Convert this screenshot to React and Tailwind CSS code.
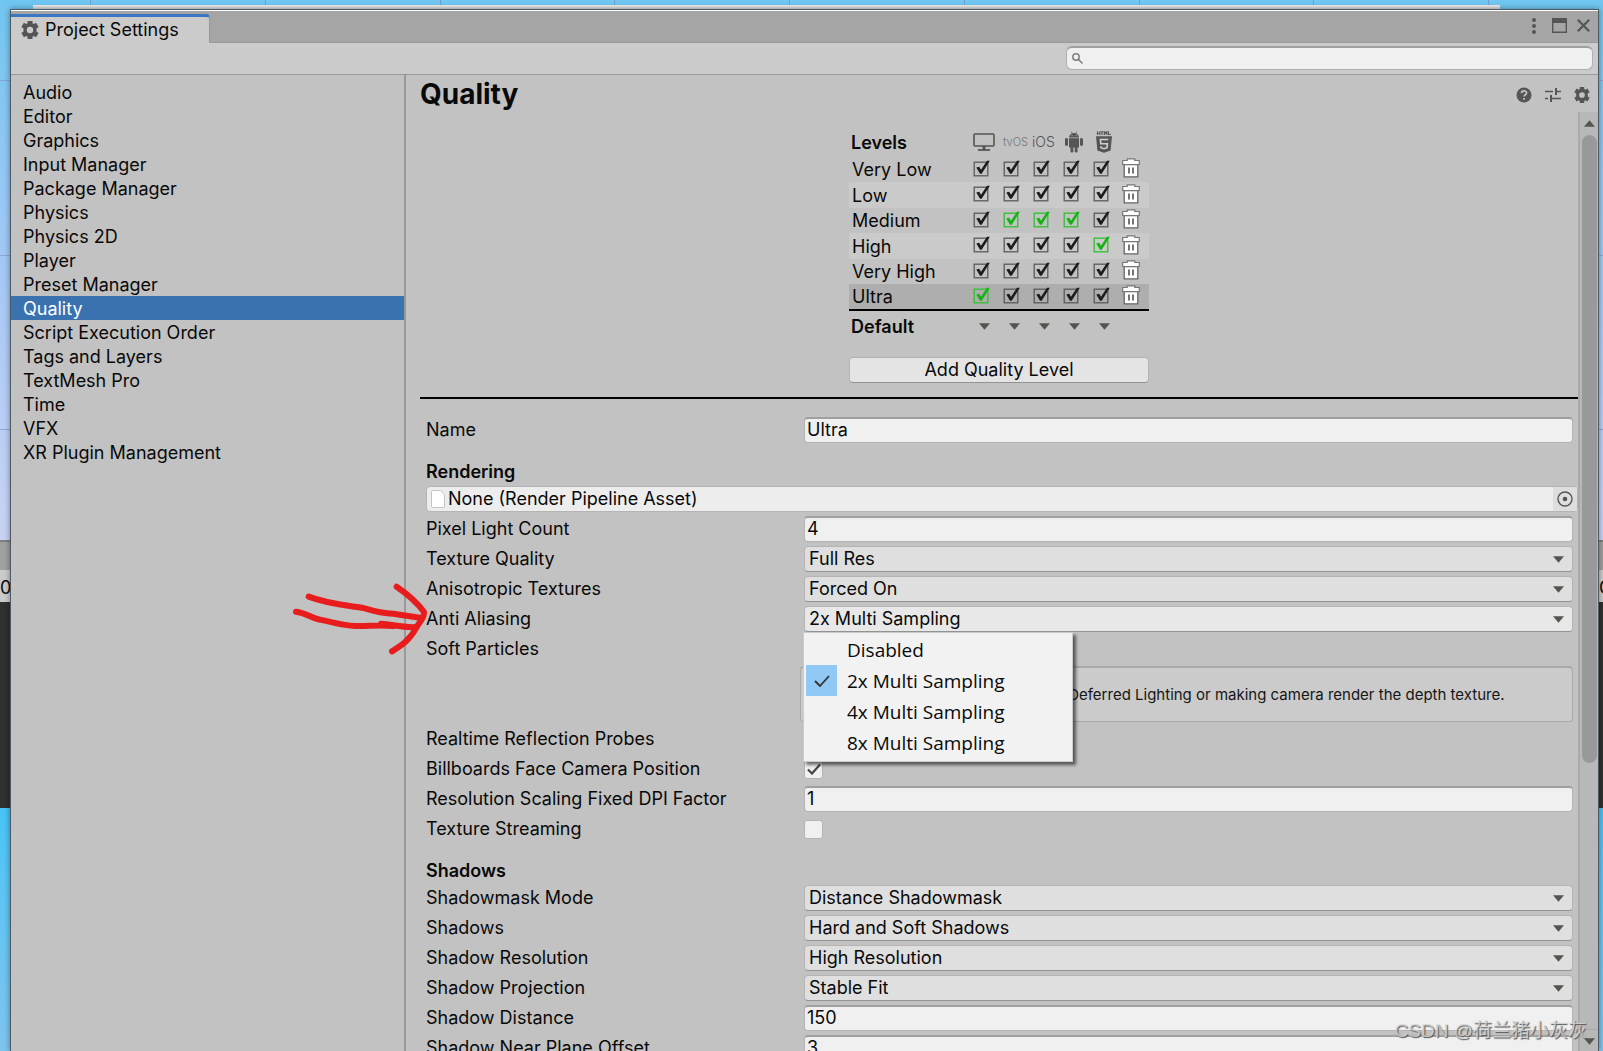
import { useState } from "react";

const SECTIONS = [
  "Audio", "Editor", "Graphics", "Input Manager", "Package Manager", "Physics",
  "Physics 2D", "Player", "Preset Manager", "Quality", "Script Execution Order",
  "Tags and Layers", "TextMesh Pro", "Time", "VFX", "XR Plugin Management",
];

// def = index of the platforms that use this level by default
const LEVELS = [
  { name: "Very Low",  def: [],        row: "h-[25px]" },
  { name: "Low",       def: [],        row: "h-[26px] bg-[#cacaca]" },
  { name: "Medium",    def: [1, 2, 3], row: "h-[25px]" },
  { name: "High",      def: [4],       row: "h-[26px] bg-[#cacaca]" },
  { name: "Very High", def: [],        row: "h-[25px]" },
  { name: "Ultra",     def: [0],       row: "h-[26px] bg-[#aeaeae]" },
];

const PLATFORMS = ["Standalone", "tvOS", "iOS", "Android", "WebGL"];
const AA_OPTIONS = ["Disabled", "2x Multi Sampling", "4x Multi Sampling", "8x Multi Sampling"];

/* ---------- icons ---------- */

function Gear({ className }) {
  return (
    <svg viewBox="0 0 18 18" className={className} fill="#555">
      <path
        fillRule="evenodd"
        d="M6.5 0h5v2.3l1.2.7 2.4-1.2 2.5 4.2-2.1 1.4v3.2l2.1 1.4-2.5 4.2-2.4-1.2-1.2.7V18h-5v-2.3l-1.2-.7-2.4 1.2L.4 12l2.1-1.4V7.4L.4 6l2.5-4.2L5.3 3l1.2-.7zM9 5.8a3.2 3.2 0 1 0 0 6.4 3.2 3.2 0 0 0 0-6.4z"
      />
    </svg>
  );
}

function Caret({ className = "" }) {
  return (
    <svg viewBox="0 0 12 7" className={`h-[7px] w-[11px] pointer-events-none ${className}`} fill="#555550">
      <path d="M0 0h12L6 7z" />
    </svg>
  );
}

function Monitor() {
  return (
    <svg viewBox="0 0 22 18" className="h-[18px] w-[22px]" fill="none" stroke="#555">
      <rect x="1" y="1" width="20" height="12" rx="1" strokeWidth="1.6" />
      <path d="M11 13v3.5" strokeWidth="3" />
      <path d="M5 17h12" strokeWidth="1.8" />
    </svg>
  );
}

function Android() {
  return (
    <svg viewBox="0 0 18 22" className="h-[22px] w-[18px]" fill="#555">
      <path d="M4 6.5C4 4.5 5.5 3 7 2.4L6 .6l.5-.3 1.1 1.9a5 5 0 0 1 2.8 0L11.5.3l.5.3-1 1.8c1.500.6 3 2.100 3 4.100z" />
      <path d="M4 7.2h10v9.300H4z" />
      <rect x="0" y="7" width="3" height="8" rx="1.4" />
      <rect x="15" y="7" width="3" height="8" rx="1.4" />
      <rect x="5.500" y="14" width="2.8" height="7.5" rx="1.2" />
      <rect x="9.700" y="14" width="2.8" height="7.5" rx="1.2" />
      <circle cx="7" cy="4.6" r=".6" fill="#c2c2c2" />
      <circle cx="11" cy="4.6" r=".6" fill="#c2c2c2" />
    </svg>
  );
}

function Html5() {
  return (
    <svg viewBox="0 0 16 22" className="h-[22px] w-[16px]" fill="#555">
      <path d="M1.5.3V4M3.900.3V4M1.5 2.200h2.400M4.700.8h2.600M6 .8V4M8.300 4V.6l1.300 1.800L10.900.6V4M12.500.3v3.200h2.200" fill="none" stroke="#555" strokeWidth="1.1" />
      <path d="M0 5.200h16l-1.4 14.3L8 21.8l-6.600-2.300z" />
      <path d="M12.3 8.500H4.400l.4 4.300h6.600l-.4 3.900-3 1-3-1-.1-1.500" fill="none" stroke="#d0d0d0" strokeWidth="1.6" />
    </svg>
  );
}

function Trash() {
  return (
    <svg viewBox="0 0 18 20" className="h-[20px] w-[18px]" fill="#fff" stroke="#666" strokeWidth="1.3">
      <path d="M2.2 6.5h13.6v12.3H2.200z" />
      <path d="M.7 2.5h4.500V.8h7.600v1.700h4.500v4H.7z" stroke="#777" strokeWidth="1.2" />
      <path d="M7 9.500v6M11 9.500v6" strokeWidth="1.8" />
    </svg>
  );
}

/* ---------- controls ---------- */

function Row({ label, id, children }) {
  return (
    <div className="flex h-[26px] items-center mb-1">
      <label htmlFor={id} className="w-[378px] shrink-0">{label}</label>
      {children}
    </div>
  );
}

function TextRow({ label, id, value }) {
  return (
    <Row label={label} id={id}>
      <input
        id={id}
        defaultValue={value}
        className="h-[26px] min-w-0 flex-1 rounded border border-[#b4b4b4] border-t-2 border-t-[#a0a0a0] bg-[#f0f0f0] px-[2px] pb-[2px] outline-none"
      />
    </Row>
  );
}

function SelectRow({ label, id, value, options = [value], open, onChange }) {
  return (
    <Row label={label} id={id}>
      <div className="grid min-w-0 flex-1 items-center">
        <select
          id={id}
          value={value}
          onChange={e => onChange?.(e.target.value)}
          className={`col-start-1 row-start-1 h-[26px] appearance-none rounded border border-[#b4b4b4] border-b-[#939393] px-1 outline-none ${open ? "bg-[#e8e8e8]" : "bg-[#dfdfdf]"}`}
        >
          {options.map(o => <option key={o}>{o}</option>)}
        </select>
        <Caret className="col-start-1 row-start-1 mr-[9px] justify-self-end" />
      </div>
    </Row>
  );
}

function CheckRow({ label, id, checked }) {
  return (
    <Row label={label} id={id}>
      <span className="grid size-[19px] place-items-center">
        <input
          id={id}
          type="checkbox"
          defaultChecked={checked}
          className="peer col-start-1 row-start-1 size-[19px] appearance-none rounded-[3px] border border-[#b4b4b4] bg-[#f0f0f0]"
        />
        <svg viewBox="0 0 14 12" className="pointer-events-none invisible col-start-1 row-start-1 w-[14px] peer-checked:visible" fill="none" stroke="#444" strokeWidth="2.2">
          <path d="M1 6.500l4 4 8-9" />
        </svg>
      </span>
    </Row>
  );
}

function LevelCheck({ label, green }) {
  return (
    <label className={`grid w-[18px] ${green ? "text-[#12b312]" : "text-[#1c1c1c]"}`}>
      <input type="checkbox" defaultChecked aria-label={label} className="peer col-start-1 row-start-1 size-[17px] appearance-none" />
      <svg viewBox="0 0 17 17" className="pointer-events-none col-start-1 row-start-1 size-[17px]" fill="none">
        <rect x="1.2" y="2.2" width="13.6" height="13.6" stroke={green ? "#2fc02f" : "#5a5a5a"} strokeWidth="1.3" />
        <path d="M3.3 7.500l2.900-.8 1.800 3L14 .8h2.800L8.700 13.800H7z" fill="currentColor" />
      </svg>
    </label>
  );
}

/* ---------- panels ---------- */

// Desktop and the other editor window, seen round the edges
function Backdrop() {
  return (
    <div className="absolute inset-0 flex flex-col bg-[#76c9f5]">
      <div className="h-[540px] bg-linear-to-b from-[#6fc6f0] via-[#a5c8f5] via-50% to-[#c9d3f3]">
        <div className="flex h-[9px] justify-between pl-[90px] pr-[114px]">
          {[0, 1, 2, 3, 4, 5, 6, 7, 8].map(i => <i key={i} className="w-px bg-[#6f9fd0]" />)}
        </div>
        <div className="mt-[71px] h-px bg-[#8aa6d8]" />
        <div className="mt-[174px] h-px bg-[#8fa6dc]" />
        <div className="mt-[173px] h-px bg-[#8fa6dc]" />
      </div>
      <div className="h-[30px] border-t-2 border-[#808080] bg-[#a0a0a0]" />
      <div className="flex h-8 items-center justify-between bg-[#cbcbcb] pt-1 text-[18px]">
        <span className="w-[10px] overflow-hidden">0(</span>
        <span className="w-1 overflow-hidden">C</span>
      </div>
      <div className="h-[206px] bg-[#303030]" />
      <div className="flex-1 bg-linear-to-b from-[#45c5f6] to-[#7ec4ef]" />
      <div className="absolute left-[33px] right-[103px] top-[5px] h-1 bg-linear-to-b from-[#f0f0f0] to-[#d8d8d8]" />
    </div>
  );
}

function TitleBar() {
  return (
    <header>
      <div className="flex h-8 items-stretch justify-between border-b border-[#999] bg-[#a5a5a5]">
        <h2 className="-mb-px mt-[3px] flex w-[199px] items-center gap-[6px] rounded-tr border-r border-t-[3px] border-r-[#999] border-t-[#3b76c4] bg-[#cbcbcb] pl-[10px] text-[18px]">
          <Gear className="size-[18px]" />
          Project Settings
        </h2>
        <div className="flex items-center gap-[10px] pb-[2px] pr-2">
          <button aria-label="Menu" className="mr-[6px]">
            <svg viewBox="0 0 4 16" className="h-4 w-1" fill="#555">
              <circle cx="2" cy="2" r="2" /><circle cx="2" cy="8" r="2" /><circle cx="2" cy="14" r="2" />
            </svg>
          </button>
          <button aria-label="Maximize">
            <svg viewBox="0 0 15 15" className="size-[15px]" fill="none" stroke="#555">
              <path d="M.7.700h13.600v13.600H.7z" strokeWidth="1.4" />
              <path d="M0 2.500h15" strokeWidth="5" />
            </svg>
          </button>
          <button aria-label="Close">
            <svg viewBox="0 0 13 13" className="size-[13px]" stroke="#555" strokeWidth="2.2">
              <path d="M.8.800l11.400 11.400M12.200.800L.8 12.200" />
            </svg>
          </button>
        </div>
      </div>
      <div className="flex h-8 items-center justify-end border-b border-[#999] bg-[#cbcbcb] pb-px pr-[5px]">
        <label className="flex h-6 w-1/3 items-center rounded-md border border-[#b0b0b0] border-t-2 border-t-[#a0a0a0] bg-[#f0f0f0] px-[5px]">
          <svg viewBox="0 0 11 11" className="size-[11px]" fill="none" stroke="#808080" strokeWidth="1.5">
            <circle cx="4" cy="4" r="3.2" /><path d="M6.400 6.400l4.100 4.100" />
          </svg>
          <input type="text" aria-label="Search" className="min-w-0 flex-1 bg-transparent pl-1 outline-none" />
        </label>
      </div>
    </header>
  );
}

function Levels() {
  return (
    <div className="mx-auto w-[300px]">
      <table className="w-full table-fixed border-collapse text-[18px] leading-5">
        <thead className="text-left">
          <tr className="h-[29px]">
            <th className="w-[123px] p-0 pl-[2px] font-semibold">Levels</th>
            <th className="w-[30px] p-0 pb-[2px] pl-px" aria-label="Standalone"><Monitor /></th>
            <th className="w-[30px] p-0 pb-[2px] pl-px text-[11px] font-light text-[#777]">tvOS</th>
            <th className="w-[30px] p-0 pb-[2px] text-[14px] font-light text-[#555]">iOS</th>
            <th className="w-[30px] p-0 pb-[2px] pl-[3px]" aria-label="Android"><Android /></th>
            <th className="w-[30px] p-0 pb-[2px] pl-1" aria-label="WebGL"><Html5 /></th>
            <th />
          </tr>
        </thead>
        <tbody className="border-b-2 border-black">
          {LEVELS.map(l => (
            <tr key={l.name} className={l.row}>
              <td className="p-0 pl-[3px] pt-px">{l.name}</td>
              {PLATFORMS.map((p, i) => (
                <td key={p} className="p-0 pb-[3px] pl-px"><LevelCheck label={`${l.name} ${p}`} green={l.def.includes(i)} /></td>
              ))}
              <td className="p-0 pb-[3px]"><button aria-label={`Delete ${l.name}`} className="block"><Trash /></button></td>
            </tr>
          ))}
        </tbody>
        <tfoot>
          <tr className="h-8">
            <th className="p-0 pl-[2px] text-left font-semibold">Default</th>
            {PLATFORMS.map(p => (
              <td key={p} className="p-0 pl-[7px]"><button aria-label={`Default for ${p}`} className="block"><Caret /></button></td>
            ))}
            <td />
          </tr>
        </tfoot>
      </table>
      <button className="mt-[15px] block h-[26px] w-full rounded border border-[#b4b4b4] border-b-[#939393] bg-[#e4e4e4]">
        Add Quality Level
      </button>
    </div>
  );
}

function AntiAliasMenu({ value, onPick }) {
  return (
    <ul
      role="listbox"
      className="absolute left-[377px] top-[26px] z-10 w-[270px] border border-[#ccc] bg-[#f2f2f2] px-[2px] pb-[3px] pt-px text-[19px] shadow-[3px_3px_3px_rgba(0,0,0,0.55)]"
      style={{ fontFamily: '"Open Sans", "Noto Sans", sans-serif' }}
    >
      {AA_OPTIONS.map(o => (
        <li key={o} role="option" aria-selected={o === value}>
          <button onClick={() => onPick(o)} className="flex h-[31px] w-full items-center gap-[10px] text-left">
            <span className={`grid size-[31px] place-items-center ${o === value ? "bg-[#90c8f6]" : ""}`}>
              {o === value && (
                <svg viewBox="0 0 16 12" className="w-4" fill="none" stroke="#333" strokeWidth="1.8">
                  <path d="M1 6l5 5 9-10" />
                </svg>
              )}
            </span>
            {o}
          </button>
        </li>
      ))}
    </ul>
  );
}

export default function App() {
  const [section, setSection] = useState("Quality");
  const [aa, setAa] = useState("2x Multi Sampling");

  return (
    <div
      className="relative h-screen overflow-hidden pl-[10px] pr-1 pt-[9px] text-[18px] leading-6 text-[#090909]"
      style={{ fontFamily: "Inter, sans-serif" }}
    >
      <Backdrop />

      <div className="relative flex h-full flex-col border-x border-t border-[#4d5a66] bg-[#c2c2c2] shadow-[0_0_6px_rgba(0,0,0,0.4)]">
        <div className="h-px shrink-0 bg-white" />
        <TitleBar />

        <div className="flex min-h-0 flex-1">
          {/* Section list */}
          <nav className="w-[395px] shrink-0 border-r-2 border-[#999] pt-[5px]">
            {SECTIONS.map(s => (
              <a
                key={s}
                href="#"
                onClick={e => { e.preventDefault(); setSection(s); }}
                className={`block h-6 pl-3 pt-px ${s === section ? "bg-[#3a72b0] text-white" : ""}`}
              >
                {s}
              </a>
            ))}
          </nav>

          {/* Settings */}
          <main className="flex min-w-0 flex-1 flex-col">
            <div className="flex h-[37px] shrink-0 items-center justify-between pl-[14px] pr-2">
              <h1 className="text-[28px] font-bold">Quality</h1>
              <div className="flex items-center gap-[13px] pt-[2px]">
                <button aria-label="Help">
                  <svg viewBox="0 0 16 16" className="size-4">
                    <circle cx="8" cy="8" r="7.5" fill="#555" />
                    <path d="M5.500 6.300C5.500 3.200 10.600 3.200 10.600 6c0 1.800-2.500 1.800-2.500 3.600M8.100 11v1.800" fill="none" stroke="#c2c2c2" strokeWidth="1.7" />
                  </svg>
                </button>
                <button aria-label="Presets">
                  <svg viewBox="0 0 16 16" className="size-4" fill="none" stroke="#555" strokeWidth="2">
                    <path d="M0 4.500h8M11 4.500h5M0 11.500h3M6 11.500h10" strokeWidth="1.6" />
                    <path d="M11 1v7M6 8v7" />
                  </svg>
                </button>
                <button aria-label="Options"><Gear className="size-4" /></button>
              </div>
            </div>

            <div className="flex min-h-0 flex-1">
              <div className="min-w-0 flex-1 overflow-hidden pl-[14px] pt-4">
                <Levels />
                <hr className="mt-[14px] border-t-2 border-black" />

                <form className="pl-[6px] pr-[5px] pt-[18px]" onSubmit={e => e.preventDefault()}>
                  <TextRow label="Name" id="name" value="Ultra" />

                  <h3 className="mt-[15px] h-7 font-semibold leading-7">Rendering</h3>
                  <div className="-mr-[5px] mb-1 flex h-[26px] items-center rounded border border-[#b4b4b4] bg-[#ededed] pl-1">
                    <svg viewBox="0 0 14 18" className="h-[18px] w-[14px]" fill="#fff" stroke="#c4c4c4">
                      <path d="M2 .5h7.500l4 4V16a1.500 1.500 0 0 1-1.500 1.500H2A1.500 1.500 0 0 1 .5 16V2A1.500 1.500 0 0 1 2 .5z" />
                    </svg>
                    <span className="flex-1 pl-[3px]">None (Render Pipeline Asset)</span>
                    <button aria-label="Select asset" className="grid h-6 w-6 place-items-center bg-[#dedede]">
                      <svg viewBox="0 0 16 16" className="size-4" fill="none" stroke="#555" strokeWidth="1.4">
                        <circle cx="8" cy="8" r="7" /><circle cx="8" cy="8" r="1.6" fill="#555" />
                      </svg>
                    </button>
                  </div>

                  <TextRow label="Pixel Light Count" id="lights" value="4" />
                  <SelectRow label="Texture Quality" id="texq" value="Full Res" />
                  <SelectRow label="Anisotropic Textures" id="aniso" value="Forced On" />
                  <div className="relative">
                    <SelectRow label="Anti Aliasing" id="aa" value={aa} options={AA_OPTIONS} onChange={setAa} open />
                    <AntiAliasMenu value={aa} onPick={setAa} />
                  </div>
                  <CheckRow label="Soft Particles" id="soft" />
                  <div className="mb-1 ml-[374px] flex h-[56px] items-center rounded border border-[#a9a9a9] border-t-2 bg-[#cbcbcb] pl-[72px] text-[15px] text-[#161616]">
                    <p className="truncate">Soft Particles require using Deferred Lighting or making camera render the depth texture.</p>
                  </div>
                  <CheckRow label="Realtime Reflection Probes" id="probes" checked />
                  <CheckRow label="Billboards Face Camera Position" id="billboards" checked />
                  <TextRow label="Resolution Scaling Fixed DPI Factor" id="dpi" value="1" />
                  <CheckRow label="Texture Streaming" id="streaming" />

                  <h3 className="mt-[15px] h-7 font-semibold leading-7">Shadows</h3>
                  <SelectRow label="Shadowmask Mode" id="mask" value="Distance Shadowmask" />
                  <SelectRow label="Shadows" id="shadows" value="Hard and Soft Shadows" />
                  <SelectRow label="Shadow Resolution" id="shres" value="High Resolution" />
                  <SelectRow label="Shadow Projection" id="shproj" value="Stable Fit" />
                  <TextRow label="Shadow Distance" id="shdist" value="150" />
                  <TextRow label="Shadow Near Plane Offset" id="shnear" value="3" />
                </form>
              </div>

              {/* Scroll bar */}
              <div className="flex w-5 shrink-0 flex-col items-center border-l-2 border-[#aaa] bg-[#b8b8b8] pb-[6px] pt-2">
                <Caret className="rotate-180" />
                <div className="mt-2 min-h-0 w-[15px] flex-[627] rounded-full bg-[#999]" />
                <div className="flex-[266]" />
                <div className="mb-2 h-px w-full bg-[#a8a8a8]" />
                <Caret />
              </div>
            </div>
          </main>
        </div>
      </div>

      {/* Hand-drawn arrow */}
      <svg viewBox="0 0 900 330" className="pointer-events-none absolute left-[280px] top-[560px] h-[110px] w-[300px]" fill="none" stroke="#e81c1c" strokeWidth="18" strokeLinecap="round" strokeLinejoin="round">
        <path d="M86 110C140 131 190 135 250 144C280 153 300 160 340 161L424 174" />
        <path d="M48 155C80 158 90 174 120 179C160 187 190 197 225 198C270 198 300 194 340 198M303 191C340 194 370 204 410 201" />
        <path d="M350 80C385 104 410 125 432 156C434 172 422 180 410 201C390 240 365 256 336 274" />
      </svg>

      <p
        className="pointer-events-none absolute bottom-2 right-4 text-[19px] text-[#d8d8d8]/80 [text-shadow:1px_1px_1px_#555]"
        style={{ fontFamily: '"Liberation Sans", "Noto Sans CJK SC", sans-serif' }}
      >
        CSDN @荷兰猪小灰灰
      </p>
    </div>
  );
}
